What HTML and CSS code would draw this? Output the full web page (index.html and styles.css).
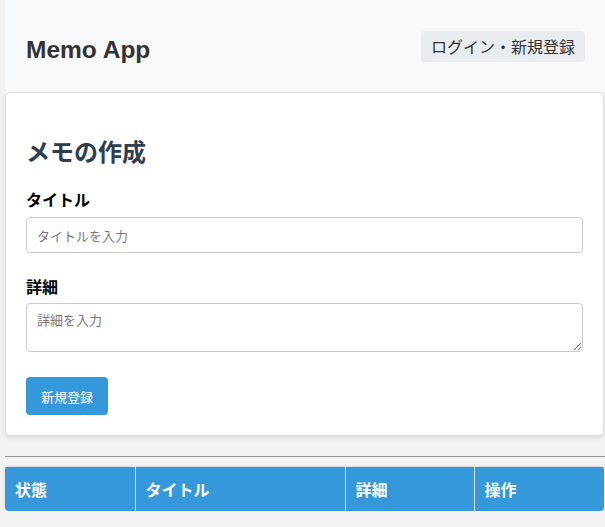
FILE: index.html
```html
<!DOCTYPE html>
<html lang="ja">
<head>
<meta charset="utf-8">
<title>Memo App</title>
<link rel="stylesheet" href="styles.css">
</head>
<body>
<div class="page">
  <header class="header">
    <h1 class="brand">Memo App</h1>
    <button class="auth-btn" type="button">ログイン・新規登録</button>
  </header>
  <section class="card">
    <h2 class="card-title">メモの作成</h2>
    <div class="field field-title">
      <label class="label" for="title">タイトル</label>
      <input class="input" id="title" type="text" placeholder="タイトルを入力">
    </div>
    <div class="field field-detail">
      <label class="label" for="detail">詳細</label>
      <textarea class="textarea" id="detail" placeholder="詳細を入力"></textarea>
    </div>
    <button class="submit" type="button">新規登録</button>
  </section>
  <hr class="divider">
  <table class="memo-table">
    <thead>
      <tr>
        <th class="col-state">状態</th>
        <th class="col-title">タイトル</th>
        <th class="col-detail">詳細</th>
        <th class="col-ops">操作</th>
      </tr>
    </thead>
    <tbody></tbody>
  </table>
</div>
</body>
</html>
```
FILE: styles.css
```css
* { box-sizing: border-box; }
html, body { margin: 0; padding: 0; }
body {
  background: #f2f2f2;
  font-family: "Liberation Sans", Arial, "Noto Sans CJK JP", sans-serif;
  color: #333;
}
.page {
  padding-left: 5px;
  padding-right: 1px;
}
.header {
  display: flex;
  align-items: center;
  justify-content: space-between;
  height: 92px;
  padding: 0 20px 0 21px;
  margin-right: -1px;
  background: #f8f9fa;
}
.brand {
  margin: 0;
  font-size: 24.5px;
  font-weight: bold;
  color: #333;
  line-height: 28px;
  padding-top: 8px;
}
.auth-btn {
  background: #e9ecef;
  border: none;
  border-radius: 4px;
  padding: 4px 10px;
  height: 31px;
  font-family: "Noto Sans CJK JP", sans-serif;
  font-size: 16px;
  line-height: 23px;
  color: #333;
}
.card {
  background: #fff;
  border: 1px solid #ddd;
  border-radius: 5px;
  box-shadow: 0 2px 4px rgba(0,0,0,0.1);
  padding: 20px 20px 20px;
}
.card-title {
  margin: 21px 0 20px;
  font-family: "Noto Sans CJK JP", sans-serif;
  font-size: 24px;
  line-height: 34px;
  font-weight: bold;
  color: #2c3e50;
}
.field {
  display: flex;
  flex-direction: column;
}
.field-title { margin-bottom: 22px; }
.field-detail { margin-bottom: 25px; }
.label {
  font-family: "Noto Sans CJK JP", sans-serif;
  font-weight: bold;
  font-size: 16px;
  line-height: 23px;
  color: #000;
  margin-bottom: 5px;
}
.field-title .label { margin-bottom: 6px; }
.input, .textarea {
  width: 100%;
  border: 1px solid #ccc;
  border-radius: 4px;
  padding: 8px 10px;
  font-family: "Noto Sans CJK JP", sans-serif;
  font-size: 13px;
  color: #333;
  background: #fff;
}
.input { height: 36px; }
.textarea { height: 49px; display: block; resize: vertical; padding-top: 6px; }
.input::placeholder, .textarea::placeholder { color: #777; }
.submit {
  background: #3498db;
  color: #fff;
  border: none;
  border-radius: 4px;
  height: 38px;
  width: 82px;
  padding: 0;
  font-family: "Noto Sans CJK JP", sans-serif;
  font-size: 13px;
  display: block;
}
.divider {
  border: none;
  border-top: 1px solid #999;
  margin: 20px -1px 9px 0;
}
.memo-table {
  width: 100%;
  border-collapse: collapse;
  box-shadow: 0 2px 4px rgba(0,0,0,0.1);
  border-radius: 4px;
  overflow: hidden;
}
.memo-table th {
  background: #3498db;
  color: #fff;
  text-align: left;
  font-family: "Noto Sans CJK JP", sans-serif;
  font-weight: bold;
  font-size: 16px;
  line-height: 24px;
  padding: 10px 10px;
  border-left: 1px solid #ddd;
  border-top: 1px solid #ddd;
}
.memo-table th:first-child { border-left: none; }
.col-state { width: 130px; }
.col-title { width: 210px; }
.col-detail { width: 129px; }
```
